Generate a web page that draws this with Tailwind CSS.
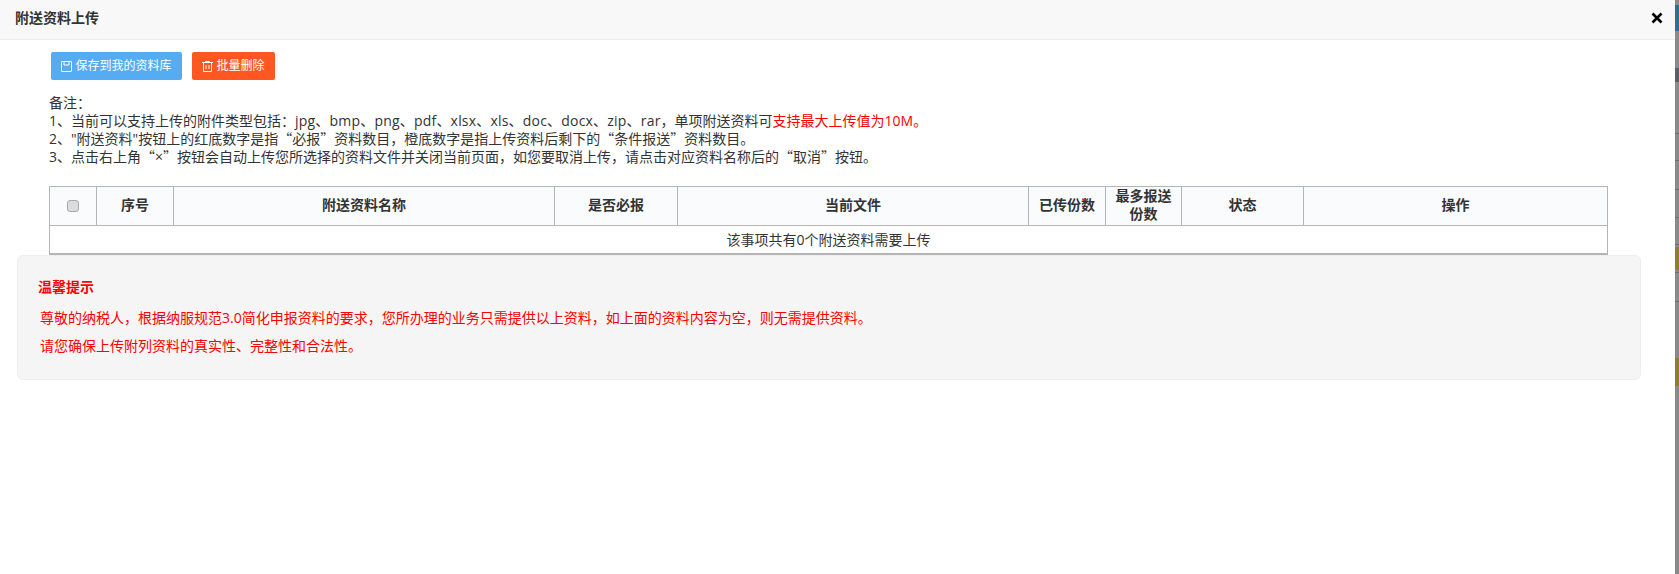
<!DOCTYPE html>
<html lang="zh">
<head>
<meta charset="utf-8">
<script src="https://cdn.jsdelivr.net/npm/@tailwindcss/browser@4"></script>
<title>附送资料上传</title>
</head>
<body class="m-0 h-[574px] w-[1679px] overflow-hidden bg-[#8a8a8a] font-['Open_Sans','Noto_Sans_CJK_SC',sans-serif] text-[14px] text-[#333]">
<div class="flex h-[574px]">
  <div class="h-full w-[1675px] bg-white">
    <header class="flex h-[40px] items-center justify-between border-b border-[#eee] bg-[#f8f8f8] pb-[3px] pl-[15px] pr-[12px]">
      <h1 class="text-[14px] font-bold leading-[18px] text-[#333]">附送资料上传</h1>
      <svg class="h-[12px] w-[12px]" viewBox="0 0 12 12" aria-hidden="true"><path d="M1.5 1.5 10.5 10.5M10.5 1.5 1.5 10.5" stroke="#000" stroke-width="2.6" fill="none"/></svg>
    </header>
    <div class="flex gap-[10px] pl-[51px] pt-[12px]">
      <button class="flex h-[28px] w-[131px] items-center justify-center gap-[3px] rounded-[2px] bg-[#56acf2] text-[12px] text-white">
        <svg class="h-[11px] w-[11px]" viewBox="0 0 11 11" fill="none" stroke="#fff" stroke-width="1"><path d="M1 .5h9a.5.5 0 0 1 .5.5v9a.5.5 0 0 1-.5.5H1a.5.5 0 0 1-.5-.5V1A.5.5 0 0 1 1 .5Z"/><path d="M3 .5v3.5h5V.5"/></svg>
        保存到我的资料库
      </button>
      <button class="flex h-[28px] w-[83px] items-center justify-center gap-[3px] rounded-[2px] bg-[#ff5722] text-[12px] text-white">
        <svg class="h-[11px] w-[11px]" viewBox="0 0 11 11" fill="none" stroke="#fff" stroke-width="1"><path d="M0 1.5h11M3.5 1.5V.5h4v1M1.5 1.5v9h8v-9M4 4v4M7 4v4"/></svg>
        批量删除
      </button>
    </div>
    <div class="pl-[49px] pt-[14px] leading-[18px] text-[#333]">
      <p>备注<span class="font-['Noto_Sans_CJK_TC'] leading-[0]">：</span></p>
      <p>1、当前可以支持上传的附件类型包括<span class="font-['Noto_Sans_CJK_TC'] leading-[0]">：</span><span class="tracking-[0.2px]">jpg、bmp、png、pdf、xlsx、xls、doc、docx、zip、rar</span><span class="font-['Noto_Sans_CJK_TC'] leading-[0]">，</span>单项附送资料可<span class="text-[#ff0000]">支持最大上传值为10M。</span></p>
      <p>2、"附送资料"按钮上的红底数字是指<span class="font-['Noto_Sans_CJK_SC'] leading-[0]">“</span>必报<span class="font-['Noto_Sans_CJK_SC'] leading-[0]">”</span>资料数目<span class="font-['Noto_Sans_CJK_TC'] leading-[0]">，</span>橙底数字是指上传资料后剩下的<span class="font-['Noto_Sans_CJK_SC'] leading-[0]">“</span>条件报送<span class="font-['Noto_Sans_CJK_SC'] leading-[0]">”</span>资料数目。</p>
      <p>3、点击右上角<span class="font-['Noto_Sans_CJK_SC'] leading-[0]">“</span>×<span class="font-['Noto_Sans_CJK_SC'] leading-[0]">”</span>按钮会自动上传您所选择的资料文件并关闭当前页面<span class="font-['Noto_Sans_CJK_TC'] leading-[0]">，</span>如您要取消上传<span class="font-['Noto_Sans_CJK_TC'] leading-[0]">，</span>请点击对应资料名称后的<span class="font-['Noto_Sans_CJK_SC'] leading-[0]">“</span>取消<span class="font-['Noto_Sans_CJK_SC'] leading-[0]">”</span>按钮。</p>
    </div>
    <table class="ml-[49px] mt-[20px] w-[1558px] table-fixed border-collapse border-b-2 border-[#b5b5b5] text-center">
      <colgroup>
        <col class="w-[47px]"><col class="w-[77px]"><col class="w-[381px]"><col class="w-[123px]"><col class="w-[351px]"><col class="w-[77px]"><col class="w-[76px]"><col class="w-[122px]"><col class="w-[304px]">
      </colgroup>
      <thead>
        <tr class="h-[39px] bg-[#f9fbfd] leading-[18px]">
          <th class="border border-[#b5b5b5] p-0 pb-[2px] font-bold"><span class="inline-block h-[12px] w-[12px] rounded-[3px] border border-[#aaa] bg-[#dcdcdc] align-middle"></span></th>
          <th class="border border-[#b5b5b5] p-0 pb-[2px] font-bold">序号</th>
          <th class="border border-[#b5b5b5] p-0 pb-[2px] font-bold">附送资料名称</th>
          <th class="border border-[#b5b5b5] p-0 pb-[2px] font-bold">是否必报</th>
          <th class="border border-[#b5b5b5] p-0 pb-[2px] font-bold">当前文件</th>
          <th class="border border-[#b5b5b5] p-0 pb-[2px] font-bold">已传份数</th>
          <th class="border border-[#b5b5b5] p-0 pb-[2px] font-bold">最多报送<br>份数</th>
          <th class="border border-[#b5b5b5] p-0 pb-[2px] font-bold">状态</th>
          <th class="border border-[#b5b5b5] p-0 pb-[2px] font-bold">操作</th>
        </tr>
      </thead>
      <tbody>
        <tr class="h-[28px]"><td colspan="9" class="border border-[#b5b5b5] p-0">该事项共有0个附送资料需要上传</td></tr>
      </tbody>
    </table>
    <section class="ml-[17px] mt-[0px] h-[125px] w-[1624px] rounded-[6px] border border-[#eee] bg-[#f5f5f5] pl-[20px] pt-[21px] text-[#ff0000]">
      <h2 class="font-bold leading-[20px]">温馨提示</h2>
      <p class="mt-[11px] pl-[2px] leading-[20px]">尊敬的纳税人<span class="font-['Noto_Sans_CJK_TC'] leading-[0]">，</span>根据纳服规范3.0简化申报资料的要求<span class="font-['Noto_Sans_CJK_TC'] leading-[0]">，</span>您所办理的业务只需提供以上资料<span class="font-['Noto_Sans_CJK_TC'] leading-[0]">，</span>如上面的资料内容为空<span class="font-['Noto_Sans_CJK_TC'] leading-[0]">，</span>则无需提供资料。</p>
      <p class="mt-[8px] pl-[2px] leading-[20px]">请您确保上传附列资料的真实性、完整性和合法性。</p>
    </section>
  </div>
  <div class="flex h-full w-[4px] flex-col bg-[#8a8a8a]">
    <div class="h-[5px] shrink-0"></div>
    <div class="h-[26px] shrink-0 bg-[#2f6f93]"></div>
    <div class="h-[37px] shrink-0"></div>
    <div class="h-[14px] shrink-0 bg-[#5a5f66]"></div>
    <div class="h-[51px] shrink-0"></div>
    <div class="h-[1px] shrink-0 bg-[#6a6a6a]"></div>
    <div class="h-[26px] shrink-0"></div>
    <div class="h-[1px] shrink-0 bg-[#6a6a6a]"></div>
    <div class="h-[28px] shrink-0"></div>
    <div class="h-[1px] shrink-0 bg-[#6a6a6a]"></div>
    <div class="h-[27px] shrink-0"></div>
    <div class="h-[1px] shrink-0 bg-[#6a6a6a]"></div>
    <div class="h-[26px] shrink-0"></div>
    <div class="h-[1px] shrink-0 bg-[#6a6a6a]"></div>
    <div class="h-[2px] shrink-0"></div>
    <div class="h-[23px] shrink-0 bg-[#8f7d2e]"></div>
    <div class="h-[2px] shrink-0"></div>
    <div class="h-[1px] shrink-0 bg-[#6a6a6a]"></div>
    <div class="h-[28px] shrink-0"></div>
    <div class="h-[1px] shrink-0 bg-[#6a6a6a]"></div>
    <div class="h-[56px] shrink-0"></div>
    <div class="h-[28px] shrink-0 bg-[#8f7d2e]"></div>
  </div>
</div>
</body>
</html>
